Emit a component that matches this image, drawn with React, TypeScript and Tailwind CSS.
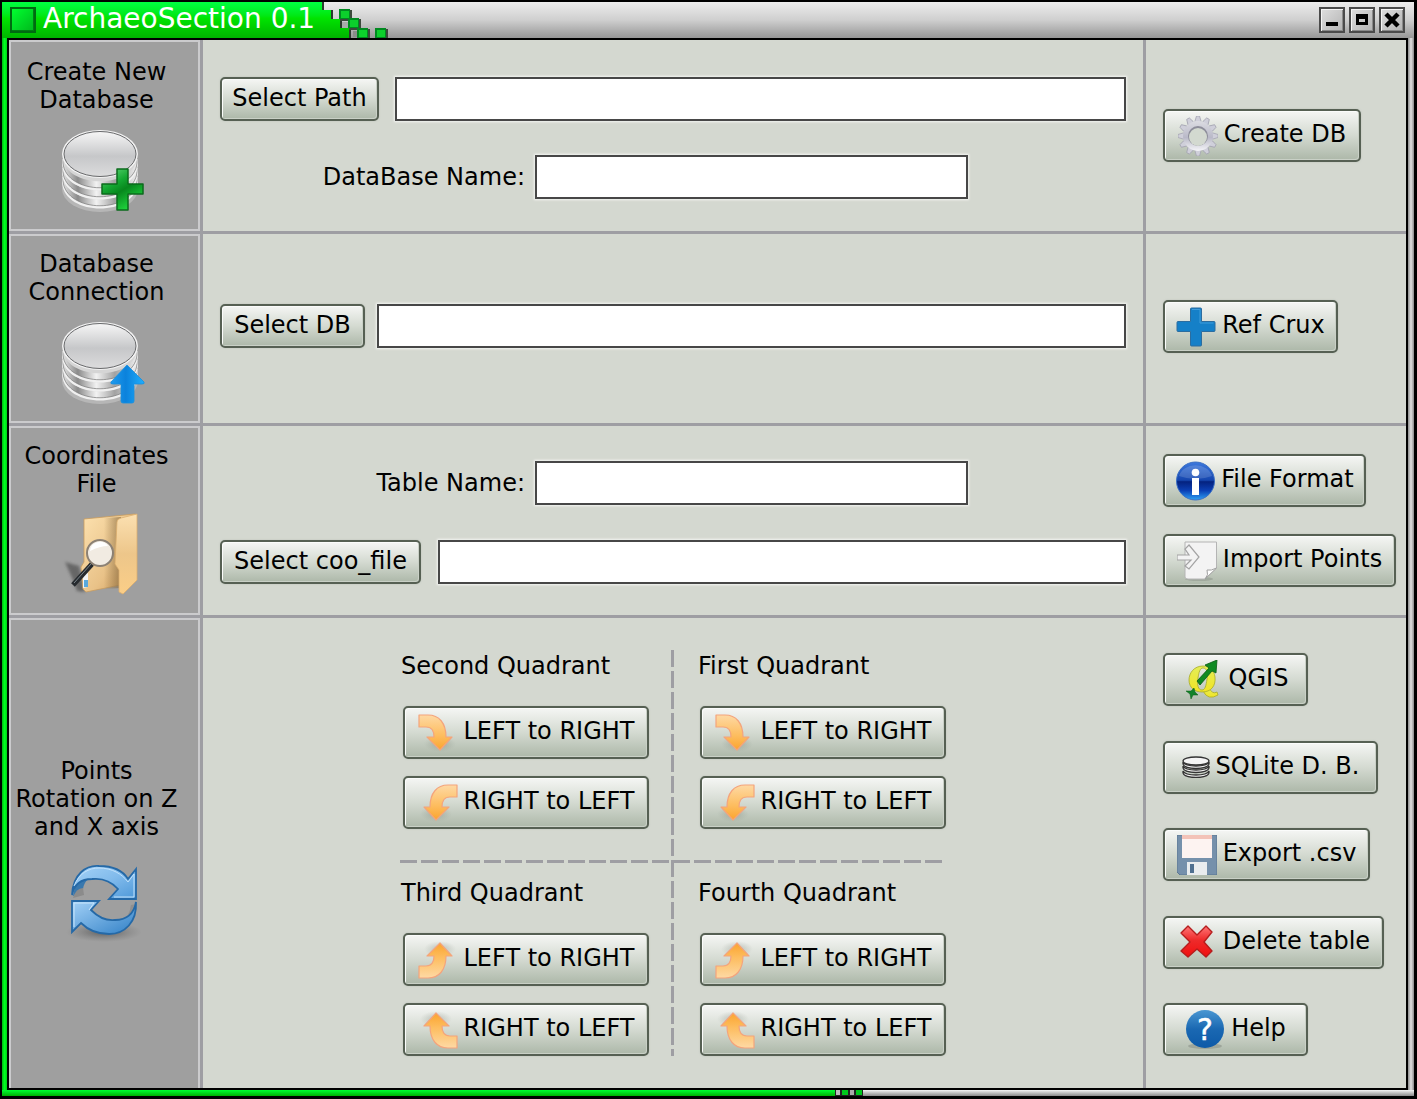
import React from 'react'
import clsx from 'clsx'

type ButtonProps = {
  children: React.ReactNode
  icon?: React.ReactNode
  className?: string
}

const ToolButton: React.FC<ButtonProps> = ({ children, icon, className }) => (
  <button
    type="button"
    className={clsx(
      'flex shrink-0 items-center justify-center gap-1.5 whitespace-nowrap rounded-[5px] border-2 border-[#566053]',
      'bg-linear-to-b from-[#f5f6f4] via-[#d4dad1] via-50% to-[#adb8a9]',
      'shadow-[inset_1px_1px_0_#fbfcfb,inset_-1px_-1px_0_#c9d0c6,0_0_2px_#b9bfb6]',
      icon ? 'h-[53px]' : 'h-11',
      className
    )}
  >
    {icon}
    <span className="pb-[3px]">{children}</span>
  </button>
)

const TextField: React.FC<{ id: string; label?: string; className?: string }> = ({ id, label, className }) => (
  <input
    id={id}
    type="text"
    aria-label={label}
    className={clsx(
      'h-11 min-w-0 border-2 border-[#474747] bg-white px-2 shadow-[0_0_2px_1px_#f4f5f2] outline-none',
      className
    )}
  />
)

const StepCell: React.FC<{ title: string; icon: React.ReactNode; className?: string }> = ({ title, icon, className }) => (
  <div className={clsx('flex flex-col items-center gap-3.5 border-2 border-[#cbcbcd] bg-[#9f9f9f]', className)}>
    <h2 className="whitespace-pre-line pr-4 text-center">{title}</h2>
    <div className="pr-1">{icon}</div>
  </div>
)

/* icons */

const DiskStack = () => (
  <>
    <defs>
      <linearGradient id="diskTop" x1="0" y1="0" x2="0" y2="1">
        <stop offset="0" stopColor="#f6f6f6" />
        <stop offset="0.55" stopColor="#c6c7c9" />
        <stop offset="1" stopColor="#dcdcdd" />
      </linearGradient>
      <linearGradient id="diskSide" x1="0" y1="0" x2="1" y2="0">
        <stop offset="0" stopColor="#e4e4e4" />
        <stop offset="0.2" stopColor="#8b8b8b" />
        <stop offset="0.45" stopColor="#f2f2f2" />
        <stop offset="0.7" stopColor="#a2a2a2" />
        <stop offset="1" stopColor="#eeeeee" />
      </linearGradient>
    </defs>
    <ellipse cx="39" cy="59" rx="38" ry="23" fill="#c6c6c6" opacity="0.6" />
    {[55, 46, 37].map(y => (
      <g key={y}>
        <path d={`M1 ${y - 8}V${y - 2}C4 ${y + 32} 74 ${y + 32} 77 ${y - 2}V${y - 8}Z`} fill="#f0f0f0" />
        <path d={`M2 ${y - 9}V${y - 4}C5 ${y + 29} 73 ${y + 29} 76 ${y - 4}V${y - 9}Z`} fill="url(#diskSide)" stroke="#777" strokeWidth="0.7" />
        <path d={`M2 ${y - 9}C5 ${y + 22} 73 ${y + 22} 76 ${y - 9}Z`} fill="#d5d5d5" />
      </g>
    ))}
    <ellipse cx="39" cy="24" rx="38" ry="24" fill="#f3f3f3" />
    <ellipse cx="39" cy="24" rx="36" ry="22.500" fill="url(#diskTop)" stroke="#68696b" strokeWidth="1" />
  </>
)

const DatabaseAddIcon = () => (
  <svg width="84" height="84" viewBox="0 0 84 84" aria-hidden="true">
    <defs>
      <linearGradient id="plusGreen" x1="0" y1="0" x2="0.6" y2="1">
        <stop offset="0" stopColor="#6bdc80" />
        <stop offset="0.4" stopColor="#14a832" />
        <stop offset="0.6" stopColor="#07871d" />
        <stop offset="1" stopColor="#1fd63e" />
      </linearGradient>
    </defs>
    <g transform="translate(0 2)"><DiskStack /></g>
    <path d="M56 41h11v15h15v10h-15v16h-11v-16h-15v-10h15z" fill="url(#plusGreen)" stroke="#0b6b1c" strokeWidth="1.500" strokeLinejoin="round" />
  </svg>
)

const DatabaseUpIcon = () => (
  <svg width="84" height="84" viewBox="0 0 84 84" aria-hidden="true">
    <defs>
      <linearGradient id="arrowBlue" x1="0" y1="0" x2="1" y2="0">
        <stop offset="0" stopColor="#1f9bee" />
        <stop offset="0.45" stopColor="#0b82dc" />
        <stop offset="1" stopColor="#20aefc" />
      </linearGradient>
    </defs>
    <g transform="translate(0 2)"><DiskStack /></g>
    <path d="M66 45l17 17q1 2-2 2h-8v17q0 2-2 2h-9q-2 0-2-2v-17h-8q-3 0-2-2z" fill="url(#arrowBlue)" stroke="#168fe0" strokeWidth="0.800" />
  </svg>
)

const FolderSearchIcon = () => (
  <svg width="84" height="84" viewBox="0 0 84 84" aria-hidden="true">
    <defs>
      <linearGradient id="folderBack" x1="0" y1="0" x2="1" y2="1">
        <stop offset="0" stopColor="#fde2b0" />
        <stop offset="0.6" stopColor="#e9c288" />
        <stop offset="1" stopColor="#cb9654" />
      </linearGradient>
      <linearGradient id="folderFront" x1="0" y1="0" x2="0" y2="1">
        <stop offset="0" stopColor="#fbe0b1" />
        <stop offset="0.5" stopColor="#edc68a" />
        <stop offset="1" stopColor="#fbce87" />
      </linearGradient>
      <linearGradient id="folderFold" x1="0" y1="0" x2="1" y2="0">
        <stop offset="0" stopColor="#8a6d42" stopOpacity="0" />
        <stop offset="1" stopColor="#8a6d42" stopOpacity="0.7" />
      </linearGradient>
      <filter id="soft" x="-20%" y="-20%" width="140%" height="140%"><feGaussianBlur stdDeviation="1.500" /></filter>
    </defs>
    <path d="M4 50l14 4 6 26-8-1-4-11z" fill="#4a4a4a" opacity="0.65" filter="url(#soft)" />
    <path d="M23 7L74 2V70L25 80 22 77 20 55 23 50z" fill="url(#folderBack)" stroke="#c99c5d" strokeWidth="0.800" />
    <path d="M43 6L60 5V76L43 77z" fill="url(#folderFold)" />
    <path d="M56 10Q56 7 60 6L76 2V68L62 82 58 80 58 58 54 52z" fill="url(#folderFront)" stroke="#dcae6e" strokeWidth="0.800" />
    <path d="M22 66q3-5 5-5v14l-5 1z" fill="#f2f4f6" />
    <path d="M23 68h4v7h-4z" fill="#5aa9dd" />
    <path d="M31 52L12 73" stroke="#262a2e" strokeWidth="5" />
    <path d="M30 52L13 71" stroke="#7b858b" strokeWidth="1" />
    <circle cx="39" cy="41" r="13" fill="#f1ebe2" stroke="#8c8174" strokeWidth="2" />
    <path d="M29 39a10 10 0 0 1 18-5q-8 0-18 5z" fill="#fff" />
  </svg>
)

const RotateIcon = () => (
  <svg width="84" height="84" viewBox="0 -5 84 84" className="overflow-visible" aria-hidden="true">
    <defs>
      <linearGradient id="rotTop" x1="0" y1="0" x2="1" y2="1">
        <stop offset="0" stopColor="#a6d3f7" />
        <stop offset="0.5" stopColor="#82bbec" />
        <stop offset="1" stopColor="#4d98d8" />
      </linearGradient>
      <linearGradient id="rotBottom" x1="0" y1="0" x2="1" y2="1">
        <stop offset="0" stopColor="#a3d1f7" />
        <stop offset="1" stopColor="#3180c6" />
      </linearGradient>
      <radialGradient id="rotShade">
        <stop offset="0" stopColor="#555" stopOpacity="0.9" />
        <stop offset="1" stopColor="#777" stopOpacity="0" />
      </radialGradient>
    </defs>
    <ellipse cx="43" cy="72" rx="38" ry="10" fill="url(#rotShade)" />
    <path d="M12 36q3-18 14-16-5 6-4 13z" fill="#3978ae" />
    <path d="M12 38q3-10 10-10l1 7z" fill="#8b8b8b" />
    <path d="M11 35C12 14 25 5 38 6 52 6 62 11 67 19L75 9V39H48L57 29C49 20 40 18 31 19 20 19 13 25 11 35Z" fill="url(#rotTop)" stroke="#2569a7" strokeWidth="1.800" />
    <path d="M13 26C18 13 28 8 38 8 51 8 61 14 67 22L73 14V37H53" fill="none" stroke="#c3e2fb" strokeWidth="1" />
    <path d="M59 62q9-3 11-17 3-1 5 0-1 14-8 19z" fill="#8f8f8f" />
    <path d="M75 42C76 62 64 74 48 74 35 74 26 69 20 63L11 72V41H38L30 50C38 58 45 61 54 60 65 60 73 54 75 42Z" fill="url(#rotBottom)" stroke="#2569a7" strokeWidth="1.800" />
    <path d="M13 67V43H33L28 50" fill="none" stroke="#c9e6fc" strokeWidth="1" />
  </svg>
)

const TurnArrow: React.FC<{ className?: string }> = ({ className }) => (
  <svg className={clsx('shrink-0', className)} width="40" height="40" viewBox="0 0 40 40" aria-hidden="true">
    <defs>
      <linearGradient id="turnFill" x1="0" y1="0" x2="0" y2="1">
        <stop offset="0" stopColor="#fed9a4" />
        <stop offset="0.6" stopColor="#fdbc5d" />
        <stop offset="1" stopColor="#fba42e" />
      </linearGradient>
      <radialGradient id="turnShade">
        <stop offset="0" stopColor="#717a6e" stopOpacity="0.4" />
        <stop offset="1" stopColor="#8b9388" stopOpacity="0" />
      </radialGradient>
    </defs>
    <ellipse cx="22" cy="31" rx="16" ry="8" fill="url(#turnShade)" />
    <path d="M1 2H10C21 2 28 10 28 24H34L22 37 9 24H16C16 18 14 14 8 14H1Z" fill="url(#turnFill)" stroke="#f4a47c" strokeWidth="1.200" strokeLinejoin="round" />
  </svg>
)

const GearIcon = () => (
  <svg className="shrink-0" width="40" height="40" viewBox="0 0 40 40" aria-hidden="true">
    <defs>
      <linearGradient id="gearFill" x1="0" y1="0" x2="0" y2="1">
        <stop offset="0" stopColor="#dcdce2" />
        <stop offset="0.55" stopColor="#b9b9c8" />
        <stop offset="1" stopColor="#f5f5f8" />
      </linearGradient>
    </defs>
    {[0, 30, 60, 90, 120, 150].map(a => (
      <path key={a} d="M18.500 0h3l1.500 5v30l-1.500 5h-3l-1.500-5V5z" fill="#cfcfda" stroke="#a4a4b1" strokeWidth="0.800" transform={`rotate(${a} 20 20)`} />
    ))}
    <circle cx="20" cy="20" r="15" fill="url(#gearFill)" />
    <circle cx="20" cy="20" r="10" fill="#8d8d9a" />
    <circle cx="20" cy="21" r="9" fill="#d3d9d0" />
  </svg>
)

const CruxIcon = () => (
  <svg className="shrink-0" width="40" height="40" viewBox="0 0 40 40" aria-hidden="true">
    <path d="M15.500 1h9q1 0 1 1v12.500H38q1 0 1 1v8q0 1-1 1H25.500V38q0 1-1 1h-9q-1 0-1-1V24.500H2q-1 0-1-1v-8q0-1 1-1h12.500V2q0-1 1-1z" fill="#1580c8" stroke="#2c6d9f" strokeWidth="1" />
    <path d="M16 2.500h8v13.500h13.500" fill="none" stroke="#3f9cda" strokeWidth="1" />
  </svg>
)

const InfoIcon = () => (
  <svg className="shrink-0" width="40" height="40" viewBox="0 0 40 40" aria-hidden="true">
    <defs>
      <linearGradient id="infoFill" x1="0" y1="0" x2="0" y2="1">
        <stop offset="0" stopColor="#3c78dd" />
        <stop offset="0.48" stopColor="#1546ae" />
        <stop offset="0.52" stopColor="#04227f" />
        <stop offset="0.75" stopColor="#0b3fb4" />
        <stop offset="1" stopColor="#2ea1f5" />
      </linearGradient>
    </defs>
    <circle cx="20.500" cy="20" r="19" fill="url(#infoFill)" stroke="#3b6fc4" strokeWidth="1" />
    <path d="M4 15a17 14 0 0 1 33 0q-16 6-33 0z" fill="#fff" opacity="0.15" />
    <circle cx="20.500" cy="11.500" r="3.800" fill="#fff" />
    <rect x="17" y="17" width="7" height="17" fill="#fff" />
  </svg>
)

const ImportIcon = () => (
  <svg className="shrink-0" width="40" height="40" viewBox="0 0 40 40" aria-hidden="true">
    <ellipse cx="22" cy="38" rx="14" ry="2" fill="#8c9389" opacity="0.5" />
    <path d="M8 1H39.500V27L28 38H11Q8 38 8 36Z" fill="#f3f3f3" stroke="#b4b4b4" strokeWidth="1" />
    <path d="M28 38q4-4 2-9 4 1 9.500-2z" fill="#fff" stroke="#a0a0a0" strokeWidth="1" />
    <path d="M0 14H12L8 8 12 4 22 16 12 28 8 25 14 19H0Z" fill="#f3f3f3" stroke="#a3a3a3" strokeWidth="1.200" />
  </svg>
)

const QgisIcon = () => (
  <svg className="shrink-0" width="40" height="40" viewBox="0 0 40 40" aria-hidden="true">
    <defs>
      <linearGradient id="qFill" x1="0" y1="0" x2="0" y2="1">
        <stop offset="0" stopColor="#e3ee58" />
        <stop offset="1" stopColor="#f2e424" />
      </linearGradient>
    </defs>
    <path d="M20 31Q25 41 35 35L34 32Q29 35 26 27Z" fill="url(#qFill)" stroke="#a7ab29" strokeWidth="0.800" />
    <path
      d="M20 6C11 6 6 13 6 20 6 28 12 32 19 32 28 32 33 26 32 17 31 10 27 6 20 6ZM20 8C24 8 25 13 24 19 23 26 22 30 19 30 15 30 14 25 15 18 16 12 17 8 20 8Z"
      fill="url(#qFill)"
      stroke="#a7ab29"
      strokeWidth="0.800"
      fillRule="evenodd"
    />
    <path d="M14 21L26 8 22 5 34 0 33 13 29 11 17 25Z" fill="#0f8a22" stroke="#075c12" strokeWidth="0.800" />
    <path d="M3 31l5 0 3-3 1 4 3 3-5 0-2 4-1-5z" fill="#12822a" stroke="#075c12" strokeWidth="0.500" />
  </svg>
)

const SqliteIcon = () => (
  <svg className="shrink-0" width="28" height="22" viewBox="0 0 28 22" aria-hidden="true">
    {[15, 10, 6].map(y => (
      <path key={y} d={`M1 ${y}v2c1 6 25 6 26 0v-2q-2 4-13 4t-13-4z`} fill="#f4f4f4" stroke="#333" strokeWidth="1.300" />
    ))}
    <ellipse cx="14" cy="5" rx="13" ry="4" fill="#f4f4f4" stroke="#333" strokeWidth="1.300" />
  </svg>
)

const FloppyIcon = () => (
  <svg className="shrink-0" width="40" height="40" viewBox="0 0 40 40" aria-hidden="true">
    <path d="M0 0H40V40H3L0 37Z" fill="#7590ab" stroke="#5c7691" strokeWidth="1" />
    <rect x="5" y="0" width="30" height="23" fill="#fdf3f1" />
    <rect x="5" y="0" width="30" height="4" fill="#f3c3b8" />
    <rect x="10" y="27" width="20" height="13" fill="#e9ecee" />
    <rect x="13" y="29" width="4" height="9" fill="#4f6f8f" />
  </svg>
)

const DeleteIcon = () => (
  <svg className="shrink-0" width="40" height="40" viewBox="0 0 40 40" aria-hidden="true">
    <defs>
      <linearGradient id="delFill" x1="0" y1="0" x2="0" y2="1">
        <stop offset="0" stopColor="#f77" />
        <stop offset="0.45" stopColor="#ee2b2b" />
        <stop offset="1" stopColor="#f00f0f" />
      </linearGradient>
    </defs>
    <path d="M4 11L11 4 20 13 29 4 35 10 27 20 35 29 29 35 20 27 11 35 4 29 13 20Z" fill="url(#delFill)" stroke="#b51d1d" strokeWidth="1.400" strokeLinejoin="round" />
  </svg>
)

const HelpIcon = () => (
  <svg className="shrink-0" width="40" height="40" viewBox="0 0 40 40" aria-hidden="true">
    <defs>
      <linearGradient id="helpFill" x1="0" y1="0" x2="0" y2="1">
        <stop offset="0" stopColor="#4a97d2" />
        <stop offset="0.5" stopColor="#1a68b2" />
        <stop offset="1" stopColor="#0d5aa8" />
      </linearGradient>
    </defs>
    <ellipse cx="20" cy="36" rx="17" ry="3" fill="#8c9389" opacity="0.6" />
    <circle cx="20" cy="19" r="19" fill="url(#helpFill)" />
    <text x="20" y="30" textAnchor="middle" fontSize="30" fill="#fff" stroke="#fff" strokeWidth="0.500" fontFamily="DejaVu Sans, sans-serif">?</text>
  </svg>
)

/* window chrome */

const Pixel: React.FC<{ x: number; y: number }> = ({ x, y }) => (
  <>
    <rect x={x + 1} y={y + 1} width="12" height="11" fill="#3c4a3c" />
    <rect x={x} y={y} width="11" height="10" fill="#008a20" />
    <rect x={x + 2} y={y + 2} width="8" height="7" fill="#0cd02c" />
  </>
)

const TitleEdge = () => (
  <svg width="72" height="36" viewBox="0 0 72 36" aria-hidden="true">
    <defs>
      <linearGradient id="edgeGreen" x1="0" y1="0" x2="0" y2="1">
        <stop offset="0" stopColor="#00ff41" />
        <stop offset="0.45" stopColor="#00e400" />
        <stop offset="1" stopColor="#00b400" />
      </linearGradient>
    </defs>
    <path d="M0 0H4V8H13V18H22V27H31V36H0Z" fill="#2c3a2d" />
    <path d="M0 0H2V8H11V17H20V26H29V36H0Z" fill="url(#edgeGreen)" />
    <Pixel x={19} y={7} />
    <Pixel x={28} y={16} />
    <Pixel x={37} y={26} />
    <Pixel x={55} y={26} />
    <rect x="22" y="20" width="6" height="6" fill="#a9aca9" />
    <rect x="33" y="29" width="4" height="6" fill="#8a8d8a" />
  </svg>
)

const WindowButton: React.FC<{ label: string; children: React.ReactNode }> = ({ label, children }) => (
  <button
    type="button"
    aria-label={label}
    className="flex size-[26px] items-center justify-center border-2 border-[#4b4b4b] bg-linear-to-br from-[#dedede] to-[#b4b4b4] shadow-[inset_1px_1px_0_#f4f4f4,inset_-1px_-1px_0_#8a8a8a]"
  >
    <svg width="18" height="18" viewBox="0 0 18 18" aria-hidden="true">{children}</svg>
  </button>
)

const TitleBar = () => (
  <header className="flex h-9 items-stretch bg-linear-to-b from-[#ededed] via-[#cfcfcf] to-[#979797]">
    <div className="flex items-center gap-[7px] bg-linear-to-b from-[#00ff41] via-[#00e400] via-45% to-[#00b400] pl-2">
      <button
        type="button"
        aria-label="Window menu"
        className="size-[26px] border-2 border-[#006a12] bg-linear-to-br from-[#00ff30] to-[#00b81c] shadow-[inset_-1px_-1px_0_#007d14]"
      />
      <h1 className="w-[277px] whitespace-nowrap pb-0.5 text-[28px] text-white">ArchaeoSection 0.1</h1>
    </div>
    <TitleEdge />
    <div className="flex flex-1 items-center justify-end gap-1 pr-[9px]">
      <WindowButton label="Minimize">
        <rect x="3" y="11" width="12" height="4" fill="#000" />
      </WindowButton>
      <WindowButton label="Maximize">
        <path d="M3 3h12v11H3zM6 8v3h6V8z" fill="#000" fillRule="evenodd" />
      </WindowButton>
      <WindowButton label="Close">
        <path d="M3 3l12 12M15 3L3 15" stroke="#000" strokeWidth="4.500" />
      </WindowButton>
    </div>
  </header>
)

const BottomEdge = () => (
  <footer className="flex h-1.5">
    <div className="w-[59%] bg-linear-to-b from-[#00ff30] to-[#00b000]" />
    <svg width="28" height="6" viewBox="0 0 28 6" aria-hidden="true">
      <rect width="28" height="6" fill="#222" />
      <rect x="1" width="4" height="5" fill="#bbb" />
      <rect x="7" width="6" height="5" fill="#00c81c" />
      <rect x="15" width="4" height="5" fill="#aaa" />
      <rect x="21" width="6" height="5" fill="#00c81c" />
    </svg>
    <div className="flex-1 bg-linear-to-b from-[#f4f4f4] to-[#8a8a8a]" />
  </footer>
)

const Quadrant: React.FC<{ name: string; lower?: boolean; className?: string }> = ({ name, lower, className }) => (
  <section className={clsx('flex flex-col items-start', className)}>
    <h3 className="mb-[26px]">{name}</h3>
    <div className="ml-0.5 flex flex-col gap-[17px]">
      <ToolButton className="w-[246px]" icon={<TurnArrow className={lower ? '-scale-y-100' : ''} />}>
        LEFT to RIGHT
      </ToolButton>
      <ToolButton className="w-[246px]" icon={<TurnArrow className={lower ? '-scale-100' : '-scale-x-100'} />}>
        RIGHT to LEFT
      </ToolButton>
    </div>
  </section>
)

const App = () => {
  return (
    <div className="flex min-h-screen flex-col bg-black pb-[3px] pl-0.5 pr-[3px] pt-0.5 font-['DejaVu_Sans',sans-serif] text-2xl leading-7 text-black">
      <TitleBar />
      <div className="flex flex-1">
        <div className="w-[5px] bg-linear-to-r from-[#00b414] via-[#00ff20] to-[#00d218]" />
        <main className="grid flex-1 grid-cols-[191px_minmax(0,1fr)_260px] grid-rows-[191px_189px_189px_1fr] gap-[3px] border-2 border-black bg-[#9e9ea3] *:bg-[#d4d8d0]">
          <StepCell title={'Create New\nDatabase'} icon={<DatabaseAddIcon />} className="bg-[#9f9f9f]! pt-4" />
          <div className="flex flex-col gap-[34px] px-[17px] pt-[37px]">
            <div className="flex gap-4">
              <ToolButton className="min-w-[159px] px-2">Select Path</ToolButton>
              <TextField id="path" label="Path" className="flex-1" />
            </div>
            <div className="flex items-center gap-2.5">
              <label htmlFor="db-name" className="w-[305px] text-right">DataBase Name:</label>
              <TextField id="db-name" className="w-[433px]" />
            </div>
          </div>
          <div className="flex items-center pl-[17px]">
            <ToolButton className="w-[198px]" icon={<GearIcon />}>Create DB</ToolButton>
          </div>

          <StepCell title={'Database\nConnection'} icon={<DatabaseUpIcon />} className="bg-[#9f9f9f]! pt-3.5" />
          <div className="flex items-start gap-3 px-[17px] pt-[70px]">
            <ToolButton className="min-w-[145px] px-2">Select DB</ToolButton>
            <TextField id="db" label="Database" className="flex-1" />
          </div>
          <div className="flex items-start pl-[17px] pt-[66px]">
            <ToolButton className="w-[175px]" icon={<CruxIcon />}>Ref Crux</ToolButton>
          </div>

          <StepCell title={'Coordinates\nFile'} icon={<FolderSearchIcon />} className="bg-[#9f9f9f]! pt-3.5" />
          <div className="flex flex-col gap-[35px] px-[17px] pt-[35px]">
            <div className="flex items-center gap-2.5">
              <label htmlFor="table-name" className="w-[305px] text-right">Table Name:</label>
              <TextField id="table-name" className="w-[433px]" />
            </div>
            <div className="flex gap-[17px]">
              <ToolButton className="min-w-[201px] px-2">Select coo_file</ToolButton>
              <TextField id="coo-file" label="Coordinates file" className="flex-1" />
            </div>
          </div>
          <div className="flex flex-col gap-[27px] pl-[17px] pt-7">
            <ToolButton className="w-[203px]" icon={<InfoIcon />}>File Format</ToolButton>
            <ToolButton className="w-[233px]" icon={<ImportIcon />}>Import Points</ToolButton>
          </div>

          <StepCell title={'Points\nRotation on Z\nand X axis'} icon={<RotateIcon />} className="justify-center border-b-0 bg-[#9f9f9f]! pb-3" />
          <div className="px-[17px] pb-8 pt-8">
            <div className="mx-auto grid w-[546px] grid-cols-[271px_3px_272px] grid-rows-[210px_3px_193px]">
              <Quadrant name="Second Quadrant" className="col-start-1 row-start-1 pl-px pt-0.5" />
              <Quadrant name="First Quadrant" className="col-start-3 row-start-1 pl-6 pt-0.5" />
              <Quadrant lower name="Third Quadrant" className="col-start-1 row-start-3 pl-px pt-4" />
              <Quadrant lower name="Fourth Quadrant" className="col-start-3 row-start-3 pl-6 pt-4" />
              <div className="col-start-2 row-span-3 row-start-1 bg-[repeating-linear-gradient(180deg,#9e9ea3_0_17px,transparent_17px_21px)]" />
              <div className="col-span-3 col-start-1 row-start-2 w-[542px] bg-[repeating-linear-gradient(90deg,#9e9ea3_0_17px,transparent_17px_21px)]" />
            </div>
          </div>
          <div className="flex flex-col justify-between pb-8 pl-[17px] pt-[35px]">
            <ToolButton className="w-[145px]" icon={<QgisIcon />}>QGIS</ToolButton>
            <ToolButton className="w-[215px]" icon={<SqliteIcon />}>SQLite D. B.</ToolButton>
            <ToolButton className="w-[207px]" icon={<FloppyIcon />}>Export .csv</ToolButton>
            <ToolButton className="w-[221px]" icon={<DeleteIcon />}>Delete table</ToolButton>
            <ToolButton className="w-[145px]" icon={<HelpIcon />}>Help</ToolButton>
          </div>
        </main>
        <div className="w-1.5 bg-linear-to-r from-[#8c8c8c] via-[#e4e4e4] to-[#8a8a8a]" />
      </div>
      <BottomEdge />
    </div>
  )
}

export default App
